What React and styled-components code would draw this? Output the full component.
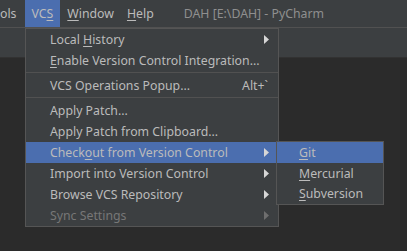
import React from "react";
import styled, { createGlobalStyle } from "styled-components";

const GlobalStyle = createGlobalStyle`
  body {
    margin: 0;
    background: #2b2b2b;
    font-family: "Noto Sans", "Open Sans", sans-serif;
    font-size: 12.3px;
    color: #bbbbbb;
  }
`;

const Page = styled.div`
  position: relative;
  width: 407px;
  height: 251px;
  overflow: hidden;
  display: flex;
  flex-direction: column;
  background: #2b2b2b;
`;

const MenuBar = styled.div`
  height: 28px;
  display: flex;
  align-items: stretch;
  background: #3c3f41;
  border-bottom: 1px solid #515151;
  box-sizing: border-box;
`;

const BarItem = styled.div`
  display: flex;
  align-items: center;
  padding: 0 ${(p) => (p.pad === undefined ? 6 : p.pad)}px 1px
    ${(p) => (p.lead === undefined ? (p.pad === undefined ? 6 : p.pad) : p.lead)}px;
  margin-right: ${(p) => p.gap || 0}px;
  background: ${(p) => (p.active ? "#4b6eaf" : "transparent")};
  color: #bbbbbb;
  white-space: nowrap;
`;

const Title = styled.div`
  display: flex;
  align-items: center;
  padding-bottom: 1px;
  margin-left: ${(p) => p.offset}px;
  color: #8f8f8f;
  white-space: nowrap;
`;

const Toolbar = styled.div`
  height: 29px;
  background: #3c3f41;
  border-bottom: 1px solid #323232;
`;

const Editor = styled.div`
  flex: 1;
  background: #2b2b2b;
`;

const Menu = styled.div`
  position: absolute;
  left: ${(p) => p.left}px;
  top: ${(p) => p.top}px;
  width: ${(p) => p.width}px;
  box-sizing: border-box;
  background: #3c3f41;
  border: 1px solid #555555;
`;

const Row = styled.div`
  height: ${(p) => p.h || 21}px;
  display: flex;
  align-items: center;
  padding: 0 8px 0 ${(p) => p.indent || 24}px;
  background: ${(p) => (p.selected ? "#4b6eaf" : "transparent")};
  color: ${(p) => (p.disabled ? "#777777" : "#bbbbbb")};
  white-space: nowrap;
`;

const Label = styled.span`
  flex: 1;
`;

const Key = styled.span`
  color: #bbbbbb;
  margin-right: 2px;
`;

const Separator = styled.div`
  height: 4px;
  padding-top: 1px;
  box-sizing: border-box;
  &::after {
    content: "";
    display: block;
    height: 1px;
    background: #515151;
  }
`;

const U = styled.span`
  text-decoration: underline;
  text-underline-offset: 2px;
`;

const Arrow = ({ dim }) => (
  <svg width="6" height="9" viewBox="0 0 6 9">
    <polygon points="0,0 5,4.5 0,9" fill={dim ? "#6e6e6e" : "#d6d6d6"} />
  </svg>
);

const App = () => {
  return (
    <Page>
      <GlobalStyle />
      <MenuBar>
        <BarItem pad={0} gap={8}>ols</BarItem>
        <BarItem active pad={7}>
          <span>
            VC<U>S</U>
          </span>
        </BarItem>
        <BarItem lead={7} gap={1}>
          <span>
            <U>W</U>indow
          </span>
        </BarItem>
        <BarItem>
          <span>
            <U>H</U>elp
          </span>
        </BarItem>
        <Title offset={24}>DAH [E:\DAH] - PyCharm</Title>
      </MenuBar>
      <Toolbar />
      <Editor />

      <Menu left={25} top={28} width={254}>
        <Row>
          <Label>
            Local <U>H</U>istory
          </Label>
          <Arrow />
        </Row>
        <Row>
          <Label>
            <U>E</U>nable Version Control Integration...
          </Label>
        </Row>
        <Separator />
        <Row>
          <Label>VCS Operations Popup...</Label>
          <Key>Alt+`</Key>
        </Row>
        <Separator />
        <Row>
          <Label>Apply Patch...</Label>
        </Row>
        <Row>
          <Label>Apply Patch from Clipboard...</Label>
        </Row>
        <Row selected>
          <Label>
            Check<U>o</U>ut from Version Control
          </Label>
          <Arrow />
        </Row>
        <Row>
          <Label>Import into Version Control</Label>
          <Arrow />
        </Row>
        <Row>
          <Label>Browse VCS Repository</Label>
          <Arrow />
        </Row>
        <Row disabled>
          <Label>Sync Settings</Label>
          <Arrow dim />
        </Row>
      </Menu>

      <Menu left={276} top={141} width={108}>
        <Row selected h={21} indent={22}>
          <Label>
            <U>G</U>it
          </Label>
        </Row>
        <Row h={20} indent={22}>
          <Label>
            <U>M</U>ercurial
          </Label>
        </Row>
        <Row h={21} indent={22}>
          <Label>
            <U>S</U>ubversion
          </Label>
        </Row>
      </Menu>
    </Page>
  );
};

export default App;
